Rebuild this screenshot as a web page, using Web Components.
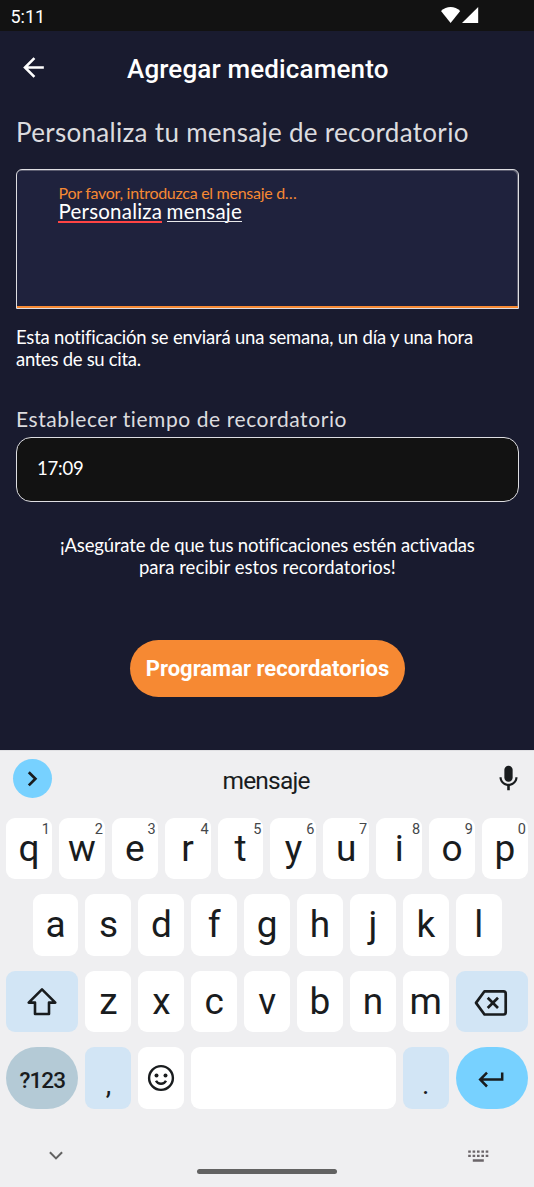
<!DOCTYPE html>
<html lang="es">
<head>
<meta charset="utf-8">
<title>Agregar medicamento</title>
<style>
html,body{margin:0;height:100%;background:#191b2f}
</style>
</head>
<body>
<reminder-app></reminder-app>
<script>
const define = (name, html, setup) => customElements.define(name, class extends HTMLElement {
  connectedCallback() {
    if (this.shadowRoot) return;
    const t = document.createElement('template');
    t.innerHTML = html;
    this.attachShadow({mode: 'open'}).append(t.content.cloneNode(true));
    if (setup) setup(this, this.shadowRoot);
  }
});

define('status-bar', `
<style>
:host{display:flex;box-sizing:border-box;height:31px;background:#121212;color:#fff;font:18px/20px Roboto,sans-serif;padding:6px 55px 0 10.5px;justify-content:space-between}
.time{letter-spacing:0;padding-top:1px}
svg{display:block;margin-top:1px}
</style>
<span class="time">5:11</span>
<svg width="38" height="16" viewBox="0 0 38 16" fill="#fff"><path d="M0 3.9C5.5-1.2 13.8-1.2 19.2 3.9L9.6 16Z"/><path d="M21 16 37.2 0V16Z"/></svg>`);

define('app-header', `
<style>
:host{display:grid;grid-template-columns:109px auto;align-items:center;height:76px;color:#fff;padding:0 0 0 18px;box-sizing:border-box}
svg{display:block;margin-top:-3px}
h1{margin:0;font:500 26px/32px Roboto,sans-serif;letter-spacing:.14px;white-space:nowrap}
</style>
<svg width="31" height="31" viewBox="0 0 24 24" fill="#fff"><path d="M20 11H7.83l5.59-5.59L12 4l-8 8 8 8 1.41-1.41L7.83 13H20v-2z"/></svg>
<h1><slot></slot></h1>`);

define('section-title', `
<style>
:host{display:block;color:#dcdcdf;font:26px/32px Lato,sans-serif;white-space:nowrap;letter-spacing:.3px}
:host([small]){font-size:21px;line-height:26px;letter-spacing:.58px}
</style><slot></slot>`);

define('message-field', `
<style>
:host{display:block;box-sizing:border-box;height:140px;border:1px solid #dedee2;border-radius:6px 6px 0 0;background:#1f223d;box-shadow:inset -1px 1px 0 #85869399;padding:13px 41px 0 41.5px;font-family:Lato,sans-serif;position:relative;white-space:nowrap}
:host::after{content:"";position:absolute;left:0;right:0;bottom:0;height:2px;background:#f68933}
.label{font-size:16px;line-height:20px;color:#f68933;letter-spacing:-.28px}
.value{font-size:20.5px;line-height:24px;color:#fff;margin-top:-4px;letter-spacing:.22px;word-spacing:-1.2px}
.w{display:inline-block;position:relative}
.w::after{content:"";position:absolute;left:0;right:0;top:22px;height:1px;background:#e8e8ea}
.bad::after{height:2px;background:#ff4444;left:-1px}
</style>
<div class="label"><slot name="label"></slot></div>
<div class="value"><span class="w bad">Personaliza</span> <span class="w">mensaje</span></div>`);

define('note-text', `
<style>:host{display:block;color:#fff;font:18.5px/22px Lato,sans-serif;white-space:nowrap;font-variant-ligatures:none;letter-spacing:-.2px}
:host([center]){text-align:center;letter-spacing:-.16px}
::slotted(span){letter-spacing:.03px}
::slotted(span.tight){letter-spacing:-.3px}</style><slot></slot>`);

define('time-field', `
<style>:host{display:block;box-sizing:border-box;height:65px;border:1.4px solid #dedee2;border-radius:15px;background:#121212;color:#fff;font:18.5px/22px Lato,sans-serif;letter-spacing:-.2px;padding:19px 20px}</style><slot></slot>`);

define('pill-button', `
<style>:host{display:flex;width:275px;height:57px;border-radius:29px;background:#f68933;color:#fff;align-items:center;justify-content:center;font:700 22px/26px Roboto,sans-serif;white-space:nowrap}</style><slot></slot>`);

define('kb-key', `
<style>
:host{display:flex;flex:0 0 45.9px;height:61.3px;border-radius:9px;background:#fff;color:#191c1e;position:relative;align-items:center;justify-content:center;box-sizing:border-box;font:37px/40px Roboto,sans-serif}
:host([tone=soft]){background:#d2e5f5}
:host([tone=mode]){background:#b4cad6;border-radius:31px;font-size:22.5px}
:host([tone=go]){background:#77d1ff;border-radius:31px}
:host([wide]){flex:1}
.main{display:block}
:host([tone=mode]) .main{margin-top:4px;font-weight:500;letter-spacing:-.9px}
:host([punct]) .main{font-size:28px;margin-top:14px}
:host([icon]) .main{margin:0}
.hint{position:absolute;top:3.5px;right:2px;font:14.5px/16px Roboto,sans-serif;color:#44474a}
::slotted(svg){display:block}
</style>
<span class="main"><slot></slot></span><span class="hint"></span>`,
(el, root) => { root.querySelector('.hint').textContent = el.getAttribute('hint') || ''; });

define('kb-row', `
<style>:host{display:flex;gap:7px;height:61.3px;padding:0 6px}
:host([inset]){padding:0 32.6px}</style><slot></slot>`,
el => {
  const keys = (el.getAttribute('keys') || '').split('').map((k, i) => {
    const key = document.createElement('kb-key');
    key.textContent = k;
    if (el.hasAttribute('numbered')) key.setAttribute('hint', (i + 1) % 10);
    return key;
  });
  const tail = el.querySelector('[slot-end]');
  keys.forEach(k => el.insertBefore(k, tail));
});

define('suggestion-bar', `
<style>
:host{display:grid;grid-template-columns:39px 1fr 45px;height:68px;box-sizing:border-box;padding:9px 9px 0 13px;color:#191c1e}
.more{width:39px;height:39px;border-radius:50%;background:#77d1ff}
svg{display:block}
.word{text-align:center;font:24.5px/43px Roboto,sans-serif;letter-spacing:-.8px}
.mic{margin:4px 0 0 12.6px}
</style>
<div class="more"><svg width="39" height="39" viewBox="0 0 39 39" fill="none" stroke="#191c1e" stroke-width="2.7"><path d="M15.8 13.2 22.4 19.8 15.8 26.4"/></svg></div>
<div class="word"><slot></slot></div>
<svg class="mic" width="31" height="31" viewBox="0 0 24 24" fill="#191c1e"><path d="M12 14.5c1.9 0 3.2-1.5 3.2-3.3V5.2c0-1.8-1.4-3.1-3.2-3.1S8.8 3.4 8.8 5.2v6c0 1.8 1.3 3.3 3.2 3.3z"/><path d="M17.3 11c0 3-2.54 5.1-5.3 5.1S6.7 14 6.7 11H5c0 3.41 2.72 6.23 6 6.72V21h2v-3.28c3.28-.48 6-3.3 6-6.72h-1.7z"/></svg>`);

define('nav-footer', `
<style>
:host{display:grid;grid-template-columns:1fr 140px 1fr;height:78px;align-items:start}
svg{display:block}
.down{margin:42px 0 0 49px}
.home{height:5px;border-radius:2.5px;background:#626262;margin-top:60px}
.kb{margin:41px 0 0 131.3px}
</style>
<svg class="down" width="14" height="10" viewBox="0 0 14 10" fill="none" stroke="#626262" stroke-width="2"><path d="M.9 1.3 7 7.4 13.1 1.3"/></svg>
<div class="home"></div>
<svg class="kb" width="21" height="13" viewBox="0 0 21 13" fill="#6b6569"><path d="M.2.4h2.6v2.3H.2zM4.6.4h2.6v2.3H4.6zM9 .4h2.6v2.3H9zM13.4.4H16v2.3h-2.6zM17.7.4h2.6v2.3h-2.6zM.2 4.8h2.6v2.3H.2zM4.6 4.8h2.6v2.3H4.6zM9 4.8h2.6v2.3H9zM13.4 4.8H16v2.3h-2.6zM17.7 4.8h2.6v2.3h-2.6zM4.8 9.2h11v2.6h-11z"/></svg>`);

define('soft-keyboard', `
<style>
:host{display:block;height:437px;background:#efeff1;box-shadow:inset 0 1px 0 #e0e0e3}
.rows{display:grid;row-gap:15.2px}
</style>
<suggestion-bar>mensaje</suggestion-bar>
<div class="rows">
<kb-row numbered keys="qwertyuiop"></kb-row>
<kb-row inset keys="asdfghjkl"></kb-row>
<kb-row keys="zxcvbnm"><kb-key wide icon tone="soft"><svg width="32" height="30" viewBox="0 0 32 30" fill="none" stroke="#191c1e" stroke-width="2.6" stroke-linejoin="round"><path d="M16 2.4 2.7 15.6H9V27h14V15.6h6.3Z"/></svg></kb-key><kb-key slot-end wide icon tone="soft"><svg style="margin-right:1px" width="34" height="28" viewBox="0 0 34 28" fill="none" stroke="#191c1e" stroke-width="2.7" stroke-linejoin="round"><path d="M10.5 3.3H29.5Q31.7 3.3 31.7 5.5V24.3Q31.7 26.5 29.5 26.5H10.5L2 14.9ZM13.7 9.7 24 20M24 9.7 13.7 20"/></svg></kb-key></kb-row>
<kb-row><kb-key wide tone="mode">?123</kb-key><kb-key punct tone="soft">,</kb-key><kb-key icon><svg width="28" height="28" viewBox="0 0 28 28" fill="none" stroke="#191c1e" stroke-width="2.4"><circle cx="14" cy="14" r="11.9"/><path d="M9 16.8Q10.5 19.8 14 19.8T19 16.8"/><g fill="#191c1e" stroke="none"><circle cx="9.5" cy="11.5" r="2"/><circle cx="18.5" cy="11.5" r="2"/></g></svg></kb-key><kb-key style="flex:0 0 204.6px"></kb-key><kb-key punct tone="soft">.</kb-key><kb-key wide icon tone="go"><svg style="margin:1px 1px 0 0" width="26" height="18" viewBox="0 0 26 18" fill="none" stroke="#191c1e" stroke-width="2.5"><path d="M24.2 2.5V9.6H2.5M9 2.7 2.2 9.6 9 16.5"/></svg></kb-key></kb-row>
</div>
<nav-footer></nav-footer>`);

define('reminder-app', `
<style>
:host{display:grid;grid-template-rows:750px 437px;width:534px;height:1187px;overflow:hidden;background:#191b2f}
main{padding:9px 15.5px 0 16px}
message-field{margin-top:21px}
note-text{margin-top:17px}
section-title[small]{margin-top:36px}
time-field{margin-top:5px}
note-text[center]{margin-top:32px}
pill-button{margin:62px auto 0 114px}
</style>
<div><status-bar></status-bar><app-header>Agregar medicamento</app-header>
<main>
<section-title>Personaliza tu mensaje de recordatorio</section-title>
<message-field><span slot="label">Por favor, introduzca el mensaje d…</span></message-field>
<note-text>Esta notificación se enviará una semana, un día y una hora<br><span class="tight">antes de su cita.</span></note-text>
<section-title small>Establecer tiempo de recordatorio</section-title>
<time-field>17:09</time-field>
<note-text center>¡Asegúrate de que tus notificaciones estén activadas<br><span>para recibir estos recordatorios!</span></note-text>
<pill-button>Programar recordatorios</pill-button>
</main></div>
<soft-keyboard></soft-keyboard>`);
</script>
</body>
</html>
